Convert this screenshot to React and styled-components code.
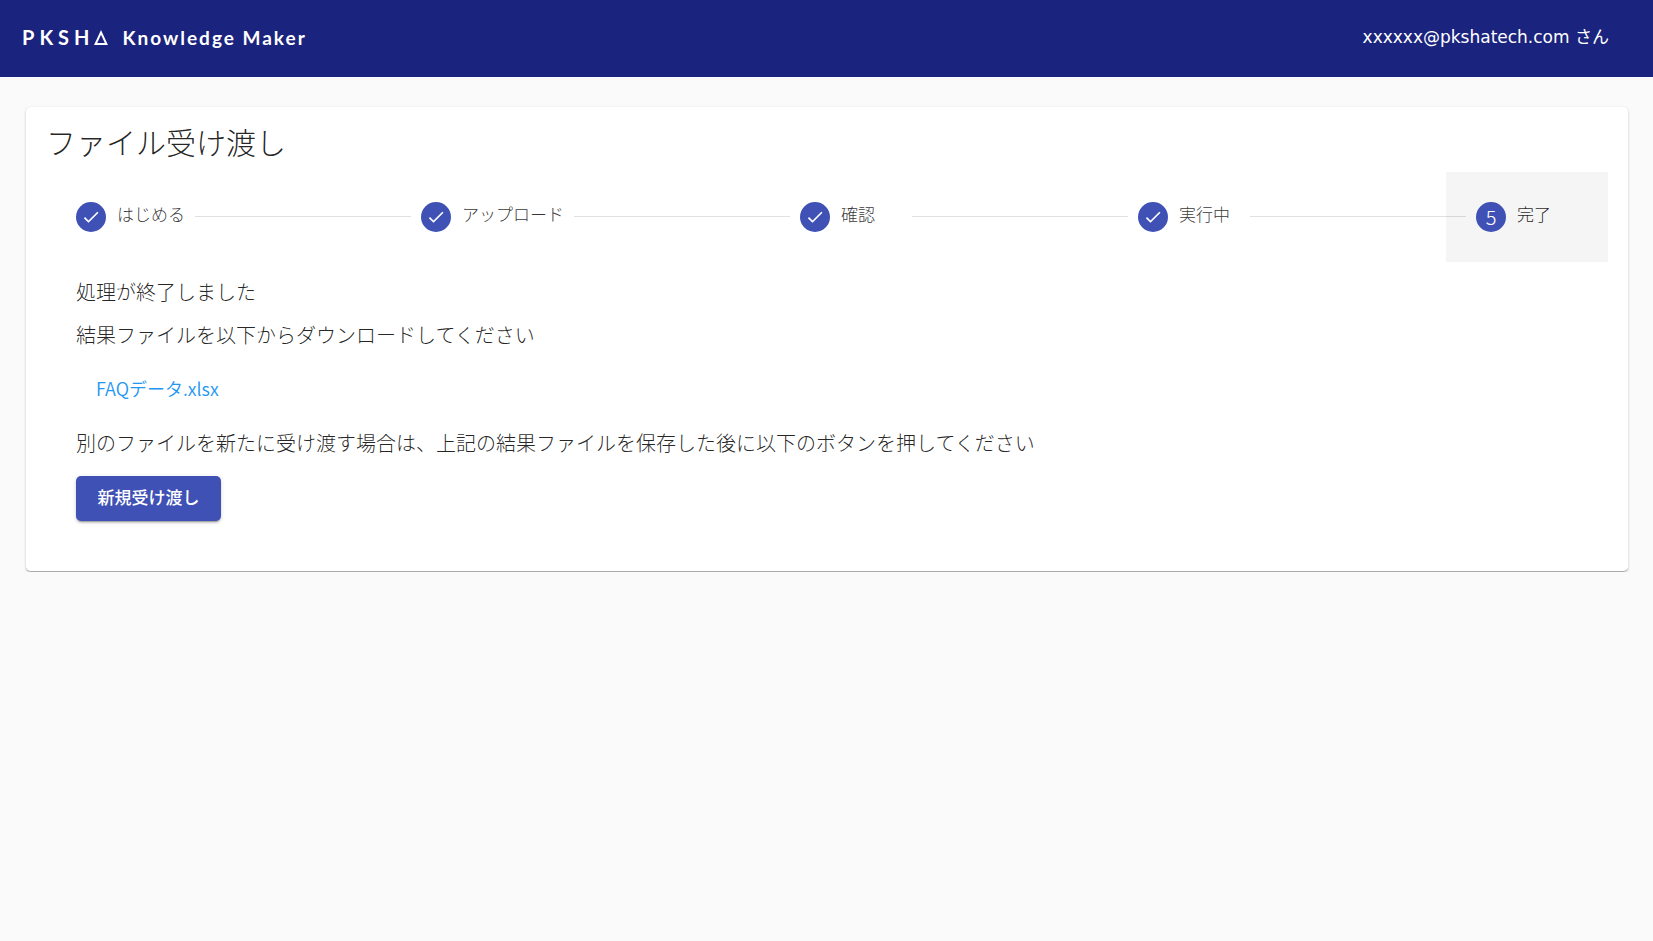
import React from 'react'
import styled, { createGlobalStyle } from 'styled-components'

const steps = ['はじめる', 'アップロード', '確認', '実行中', '完了']
const activeStep = 4

function CheckIcon() {
    return (
        <svg width='20' height='20' viewBox='0 0 24 24' fill='currentColor' aria-hidden='true'>
            <path d='M9 16.17L4.83 12l-1.42 1.41L9 19 21 7l-1.41-1.41z' />
        </svg>
    )
}

function Header() {
    return (
        <Bar>
            <Logo href='#' aria-label='PKSHA Knowledge Maker'>
                <LogoMark>
                    <span>PKSH</span>
                    <svg width='14' height='15' viewBox='0 0 14 15' fill='none' stroke='currentColor' strokeWidth='2' aria-hidden='true'>
                        <path d='M7 2.4L1.6 14H12.4Z' />
                    </svg>
                </LogoMark>
                <LogoName>Knowledge Maker</LogoName>
            </Logo>
            <UserName>xxxxxx@pkshatech.com さん</UserName>
        </Bar>
    )
}

function Stepper() {
    return (
        <StepList>
            {steps.map((label, index) => (
                <React.Fragment key={label}>
                    {index > 0 ? <StepLine /> : null}
                    <Step type='button' $active={index === activeStep}>
                        <StepIcon>{index < activeStep ? <CheckIcon /> : index + 1}</StepIcon>
                        <StepLabel $active={index === activeStep}>{label}</StepLabel>
                    </Step>
                </React.Fragment>
            ))}
        </StepList>
    )
}

function App() {
    return (
        <>
            <GlobalStyle />
            <Header />
            <Card>
                <Title>ファイル受け渡し</Title>
                <Stepper />
                <Content>
                    <Message>処理が終了しました</Message>
                    <Message>結果ファイルを以下からダウンロードしてください</Message>
                    <FileLink href='#'>FAQデータ.xlsx</FileLink>
                    <Message>別のファイルを新たに受け渡す場合は、上記の結果ファイルを保存した後に以下のボタンを押してください</Message>
                    <NewButton type='button'>新規受け渡し</NewButton>
                </Content>
            </Card>
        </>
    )
}

export default App


const GlobalStyle = createGlobalStyle`
* {
    box-sizing: border-box;
}
body {
    margin: 0;
    background-color: #fafafa;
    color: rgba(0, 0, 0, 0.87);
    font-family: "Noto Sans CJK JP", sans-serif;
    font-weight: 300;
}
button {
    font-family: inherit;
}
`

const Bar = styled.header`
    display: flex;
    align-items: center;
    justify-content: space-between;
    height: 77px;
    padding: 0 44px 4px 22px;
    background-color: #1a237e;
    color: white;
`

const Logo = styled.a`
    display: flex;
    align-items: baseline;
    gap: 14px;
    padding-top: 2px;
    color: inherit;
    text-decoration: none;
    font-family: Lato, sans-serif;
    font-size: 20px;
    font-weight: 700;
    line-height: 24px;
`

const LogoMark = styled.span`
    display: flex;
    align-items: baseline;
    span {
        letter-spacing: 5px;
    }
`

const LogoName = styled.span`
    font-size: 19px;
    letter-spacing: 2px;
`

const UserName = styled.span`
    font-family: "DejaVu Sans", "Noto Sans CJK JP", sans-serif;
    font-size: 17px;
    font-weight: 400;
    line-height: 24px;
`

const Card = styled.main`
    margin: 30px 25px 0 26px;
    padding: 15px 20px 50px;
    border-bottom: 1px solid #aaaaaa;
    border-radius: 5px;
    background-color: white;
    box-shadow: 0 1px 3px 0 rgba(0, 0, 0, 0.2);
`

const Title = styled.h1`
    margin: 0;
    height: 50px;
    font-size: 30px;
    font-weight: 300;
    line-height: 38px;
`

const StepList = styled.div`
    display: flex;
    align-items: center;
`

const Step = styled.button`
    display: flex;
    align-items: center;
    gap: 10px;
    height: 90px;
    padding: 0 30px;
    border: none;
    background-color: ${props => props.$active ? 'rgba(0, 0, 0, 0.04)' : 'transparent'};
    cursor: pointer;
`

const StepIcon = styled.span`
    display: flex;
    align-items: center;
    justify-content: center;
    height: 30px;
    width: 30px;
    border-radius: 50%;
    background-color: #3f51b5;
    color: white;
    font-size: 20px;
    font-weight: 300;
    line-height: 30px;
`

const StepLabel = styled.span`
    min-width: 62px;
    padding: 0 0 6px 1px;
    color: ${props => props.$active ? 'rgba(0, 0, 0, 0.87)' : 'rgba(0, 0, 0, 0.8)'};
    font-size: 17px;
    font-weight: 300;
    line-height: 24px;
    text-align: left;
`

const StepLine = styled.div`
    flex: 1;
    min-width: 40px;
    margin: 0 -20px 2px;
    border-top: 1px solid rgba(0, 0, 0, 0.12);
`

const Content = styled.div`
    display: flex;
    flex-direction: column;
    align-items: flex-start;
    padding: 15px 30px 0;
`

const Message = styled.p`
    margin: 0 0 13px;
    font-size: 20px;
    line-height: 30px;
`

const FileLink = styled.a`
    margin: 10px 0 25px;
    padding: 0 20px;
    color: #2196f3;
    font-size: 18px;
    font-weight: 350;
    line-height: 30px;
    text-decoration: none;
`

const NewButton = styled.button`
    min-width: 145px;
    height: 45px;
    margin-top: 5px;
    padding: 0 20px 4px;
    border: none;
    border-radius: 5px;
    background-color: #3f51b5;
    color: white;
    font-size: 17px;
    font-weight: 500;
    line-height: 40px;
    box-shadow: 0 3px 1px -2px rgba(0, 0, 0, 0.2), 0 2px 2px 0 rgba(0, 0, 0, 0.14), 0 1px 5px 0 rgba(0, 0, 0, 0.12);
    cursor: pointer;
`
